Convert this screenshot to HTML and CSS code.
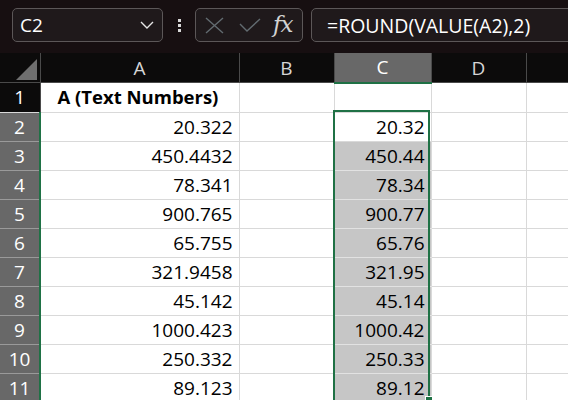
FILE: index.html
```html
<!DOCTYPE html>
<html lang="en">
<head>
    <meta charset="UTF-8">
    <title>Sheet</title>
    <link rel="stylesheet" href="styles.css">
</head>
<body>

<div class="formula-row">
    <div class="name-box">
        <span>C2</span>
        <svg class="chevron" width="14" height="8" viewBox="0 0 14 8"><path d="M1 1 L7 7 L13 1" fill="none" stroke="#e6e6e6" stroke-width="1.4"/></svg>
    </div>
    <div class="grip"><i></i><i></i><i></i></div>
    <div class="fx-buttons">
        <svg width="19" height="17" viewBox="0 0 19 17"><path d="M1 1 L18 16 M18 1 L1 16" stroke="#626b70" stroke-width="1.4"/></svg>
        <svg width="22" height="14" viewBox="0 0 22 14"><path d="M1 6 L8 13 L21 1" fill="none" stroke="#626b70" stroke-width="1.4"/></svg>
        <span class="fx">fx</span>
    </div>
    <div class="formula-box">=ROUND(VALUE(A2),2)</div>
</div>

<div class="sheet">
    <table class="grid">
        <colgroup>
            <col style="width:40px">
            <col style="width:199px">
            <col style="width:95px">
            <col style="width:97px">
            <col style="width:95px">
            <col style="width:60px">
        </colgroup>
        <tr class="col-heads">
            <th class="corner"><svg width="21" height="21" viewBox="0 0 21 21"><path d="M21 0 L21 21 L0 21 Z" fill="#6f6f6f"/></svg></th>
            <th>A</th>
            <th>B</th>
            <th class="active">C</th>
            <th>D</th>
            <th></th>
        </tr>
        <tr>
            <th class="row-head">1</th>
            <td class="title">A (Text Numbers)</td>
            <td></td><td></td><td></td><td></td>
        </tr>
        <tr><th class="row-head sel">2</th><td>20.322</td><td></td><td class="current">20.32</td><td></td><td></td></tr>
        <tr><th class="row-head sel">3</th><td>450.4432</td><td></td><td class="picked">450.44</td><td></td><td></td></tr>
        <tr><th class="row-head sel">4</th><td>78.341</td><td></td><td class="picked">78.34</td><td></td><td></td></tr>
        <tr><th class="row-head sel">5</th><td>900.765</td><td></td><td class="picked">900.77</td><td></td><td></td></tr>
        <tr><th class="row-head sel">6</th><td>65.755</td><td></td><td class="picked">65.76</td><td></td><td></td></tr>
        <tr><th class="row-head sel">7</th><td>321.9458</td><td></td><td class="picked">321.95</td><td></td><td></td></tr>
        <tr><th class="row-head sel">8</th><td>45.142</td><td></td><td class="picked">45.14</td><td></td><td></td></tr>
        <tr><th class="row-head sel">9</th><td>1000.423</td><td></td><td class="picked">1000.42</td><td></td><td></td></tr>
        <tr><th class="row-head sel">10</th><td>250.332</td><td></td><td class="picked">250.33</td><td></td><td></td></tr>
        <tr><th class="row-head sel">11</th><td>89.123</td><td></td><td class="picked">89.12</td><td></td><td></td></tr>
    </table>
    <div class="selection"><span class="handle"></span></div>
</div>

</body>
</html>
```

FILE: styles.css
```css
body {
    margin: 0;
    background: #ffffff;
    font-family: "Open Sans", "Liberation Sans", sans-serif;
    overflow: hidden;
    height: 400px;
}

/* formula bar */
.formula-row {
    display: flex;
    align-items: flex-start;
    height: 53px;
    box-sizing: border-box;
    padding: 8px 0 0 12px;
    background: #170f11;
}

.name-box,
.fx-buttons,
.formula-box {
    height: 34px;
    box-sizing: border-box;
    border: 1px solid #5c5758;
    border-radius: 5px;
    background: #1f191b;
    color: #ffffff;
    display: flex;
    align-items: center;
}

.name-box {
    width: 151px;
    padding: 0 8px 0 7px;
    justify-content: space-between;
    font-size: 19px;
}

.grip {
    width: 32px;
    display: flex;
    flex-direction: column;
    align-items: center;
    gap: 2px;
    padding-top: 11px;
}

.grip i {
    width: 3px;
    height: 3px;
    background: #d8d8d8;
}

.fx-buttons {
    width: 108px;
    padding-left: 9px;
    gap: 15px;
}

.fx-buttons .fx {
    font-family: "DejaVu Serif", "Liberation Serif", serif;
    font-style: italic;
    font-size: 23px;
    color: #d2d2d2;
    letter-spacing: -1px;
    margin-left: -3px;
    margin-top: -3px;
}

.formula-box {
    margin-left: 8px;
    flex: 1;
    margin-right: -10px;
    padding-left: 15px;
    font-size: 19.5px;
}

/* sheet */
.sheet {
    position: relative;
}

.grid {
    border-collapse: collapse;
    table-layout: fixed;
    width: 586px;
    font-size: 19px;
}

.grid th,
.grid td {
    height: 28px;
    padding: 0 6px 0 0;
    border-right: 1px solid #d9d9d9;
    border-bottom: 1px solid #d9d9d9;
    white-space: nowrap;
    text-align: right;
    color: #000000;
    font-weight: normal;
    line-height: 28px;
}

.col-heads th {
    background: #0c0b0b;
    color: #d6d6d6;
    text-align: center;
    padding: 0;
    border-right: 1px solid #4a4a4a;
    border-bottom: 1px solid #4a4a4a;
    height: 27px;
}

.col-heads th.active {
    background: #686868;
    color: #ffffff;
    border-bottom: 2px solid #1f7145;
}

.col-heads th.corner {
    text-align: right;
    vertical-align: bottom;
    padding: 0 3px 2px 0;
}

.col-heads th.corner svg {
    display: block;
    margin-left: auto;
}

.row-head {
    background: #0c0b0b;
    color: #ffffff !important;
    text-align: center !important;
    padding: 0 !important;
    border-right: 1px solid #4a4a4a !important;
}

.row-head.sel {
    background: #686868;
    border-bottom: 1px solid #9a9a9a;
    border-right: 2px solid #1f7145 !important;
}

.grid td.title {
    text-align: left;
    font-weight: bold;
    font-size: 18.5px;
    padding-left: 17px;
}

.grid td.picked {
    background: #c6c6c6;
    border-bottom-color: #e2e2e2;
}

.selection {
    position: absolute;
    left: 333px;
    top: 57px;
    width: 93px;
    height: 300px;
    border: 2px solid #1f7145;
}

.handle {
    position: absolute;
    right: -5px;
    top: 284px;
    width: 6px;
    height: 6px;
    background: #1f7145;
    border: 1px solid #ffffff;
}
```
